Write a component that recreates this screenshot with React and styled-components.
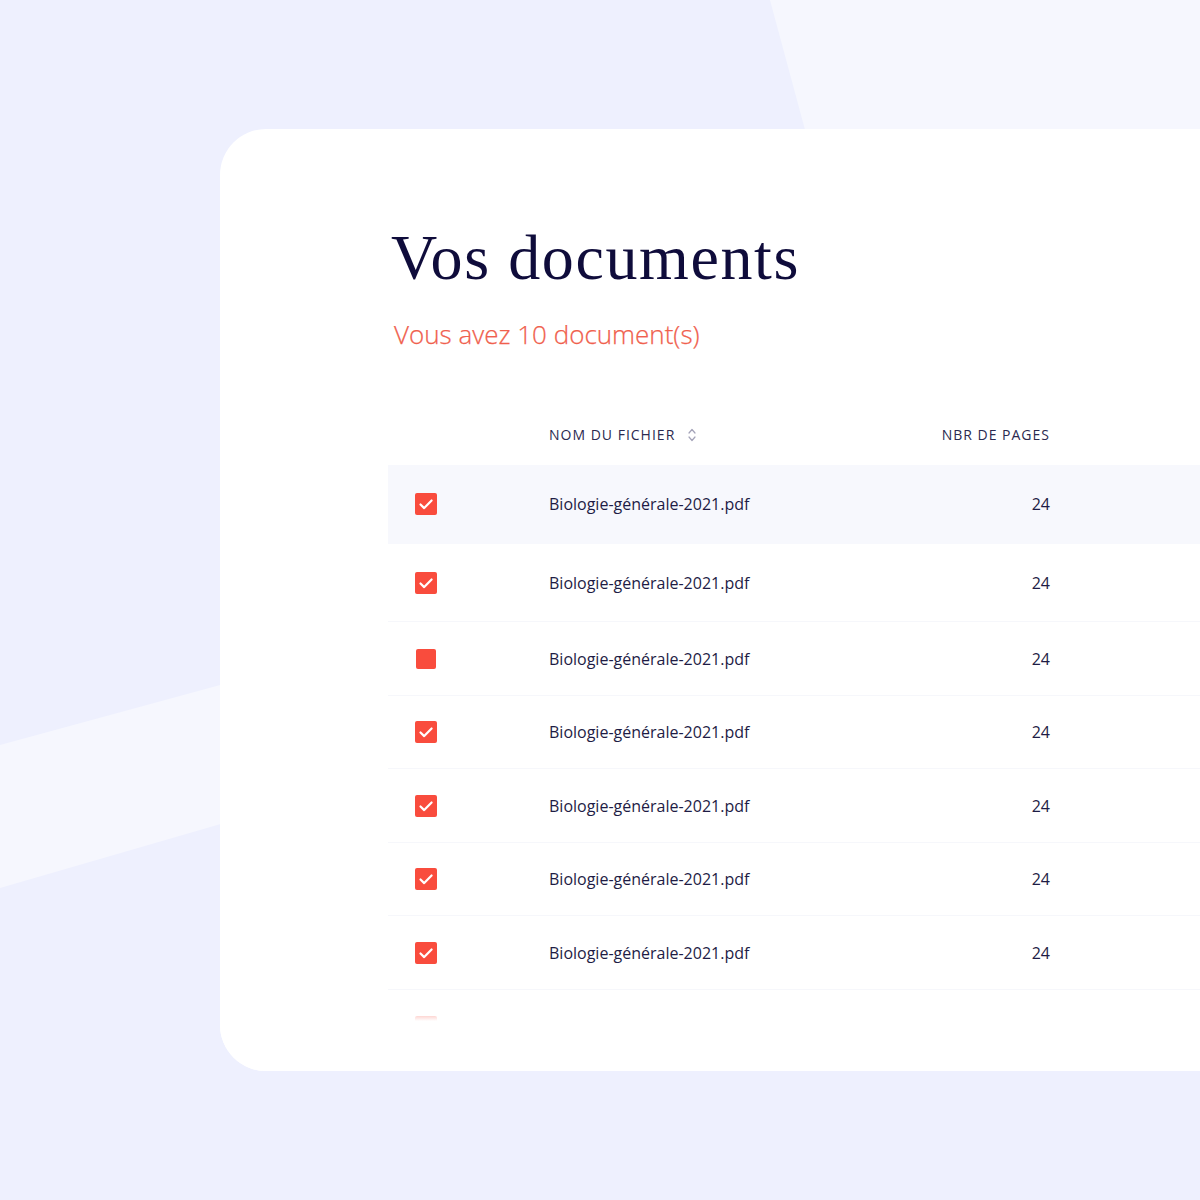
import React from "react";
import styled, { createGlobalStyle } from "styled-components";

const GlobalStyle = createGlobalStyle`
  * { box-sizing: border-box; }
  html, body { margin: 0; padding: 0; }
  body {
    font-family: "Open Sans", "Liberation Sans", sans-serif;
    background: #eef0fe;
  }
`;

const Page = styled.div`
  position: relative;
  width: 1200px;
  height: 1200px;
  overflow: hidden;
  background: #eef0fe;
  padding: 129px 0 0 220px;

  &::before,
  &::after {
    content: "";
    position: absolute;
    inset: 0;
    background: #f6f7fe;
  }

  &::before {
    clip-path: polygon(770px 0, 100% 0, 100% 300px, 851px 300px);
  }

  &::after {
    clip-path: polygon(0 745px, 400px 636px, 400px 772px, 0 888px);
  }
`;

const Card = styled.section`
  position: relative;
  z-index: 1;
  width: 1100px;
  height: 942px;
  background: #ffffff;
  border-radius: 46px 0 0 46px;
  overflow: hidden;
  padding: 97px 0 0 168px;

  &::after {
    content: "";
    position: absolute;
    left: 0;
    right: 0;
    bottom: 0;
    height: 72px;
    background: linear-gradient(to bottom, rgba(255, 255, 255, 0) 0, #fff 22px);
  }
`;

const Heading = styled.header`
  padding-left: 3px;
`;

const Title = styled.h1`
  margin: 0;
  font-family: "Liberation Serif", "DejaVu Serif", serif;
  font-weight: 400;
  font-size: 64px;
  line-height: 1;
  letter-spacing: 1.6px;
  color: #0f0c3b;
`;

const Subtitle = styled.p`
  margin: 31px 0 0 3px;
  font-size: 26px;
  font-weight: 300;
  line-height: 1;
  color: #f0604d;
  -webkit-text-stroke: 0.25px #f0604d;
`;

const Table = styled.div`
  margin-top: 58px;
  width: 932px;
`;

const Row = styled.div`
  display: grid;
  grid-template-columns: 134px 341px 160px 1fr;
  align-items: center;
  height: ${({ $h }) => $h}px;
  padding-left: 27px;
  background: ${({ $active }) => ($active ? "#f7f8fd" : "transparent")};
  border-bottom: 1px solid ${({ $line }) => ($line ? "#f6f7fb" : "transparent")};
  color: #1e1c45;
  font-size: 16px;
`;

const HeadRow = styled(Row)`
  height: 60px;
  font-size: 14px;
  letter-spacing: 1px;
  text-transform: uppercase;
  color: #2b2a4f;
`;

const HeadCell = styled.div`
  display: flex;
  align-items: center;
  gap: 12px;
  justify-content: ${({ $right }) => ($right ? "flex-end" : "flex-start")};
`;

const Cell = styled.div`
  display: flex;
  justify-content: ${({ $right }) => ($right ? "flex-end" : "flex-start")};
`;

const Box = styled.span`
  display: inline-flex;
  align-items: center;
  justify-content: center;
  width: ${({ $checked }) => ($checked ? 22 : 20)}px;
  height: ${({ $checked }) => ($checked ? 22 : 20)}px;
  margin-left: ${({ $checked }) => ($checked ? 0 : 1)}px;
  border-radius: 2px;
  background: #f94c3d;
`;

const SortIcon = () => (
  <svg width="10" height="16" viewBox="0 0 10 16" fill="none">
    <path d="M2 6l3-3.5L8 6" stroke="#a4a3b8" strokeWidth="1.2" strokeLinecap="round" strokeLinejoin="round" />
    <path d="M2 10l3 3.5L8 10" stroke="#a4a3b8" strokeWidth="1.2" strokeLinecap="round" strokeLinejoin="round" />
  </svg>
);

const Check = ({ checked }) => (
  <Box $checked={checked}>
    {checked && (
      <svg width="22" height="22" viewBox="0 0 22 22" fill="none">
        <path d="M5.5 11.5l3.7 3.6 7.4-7.6" stroke="#fff" strokeWidth="2.2" strokeLinecap="round" strokeLinejoin="round" />
      </svg>
    )}
  </Box>
);

const rows = [
  { h: 79, checked: true, active: true },
  { h: 78, checked: true, line: true },
  { h: 74, checked: false, line: true },
  { h: 73, checked: true, line: true },
  { h: 74, checked: true, line: true },
  { h: 73, checked: true, line: true },
  { h: 74, checked: true, line: true },
  { h: 74, checked: true },
];

export default function App() {
  return (
    <>
      <GlobalStyle />
      <Page>
        <Card>
          <Heading>
            <Title>Vos documents</Title>
            <Subtitle>Vous avez 10 document(s)</Subtitle>
          </Heading>
          <Table>
            <HeadRow>
              <div />
              <HeadCell>
                Nom du fichier
                <SortIcon />
              </HeadCell>
              <HeadCell $right>Nbr de pages</HeadCell>
              <div />
            </HeadRow>
            {rows.map((r, i) => (
              <Row key={i} $h={r.h} $active={r.active} $line={r.line}>
                <Cell>
                  <Check checked={r.checked} />
                </Cell>
                <Cell>Biologie-générale-2021.pdf</Cell>
                <Cell $right>24</Cell>
                <div />
              </Row>
            ))}
          </Table>
        </Card>
      </Page>
    </>
  );
}
